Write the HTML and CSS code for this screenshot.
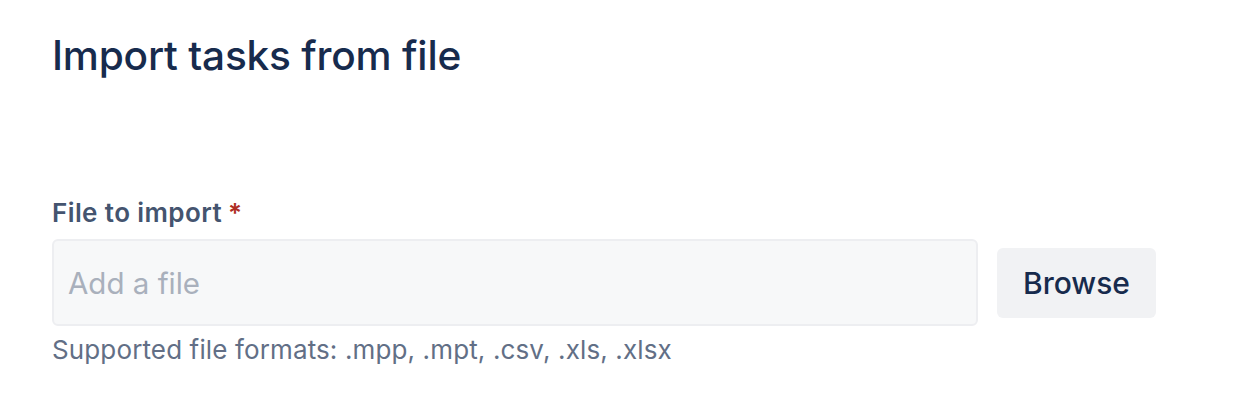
FILE: index.html
```html
<!DOCTYPE html>
<html lang="en">
<head>
<meta charset="utf-8">
<title>Import tasks from file</title>
<link rel="stylesheet" href="styles.css">
</head>
<body>
<main class="page">
  <h1 class="title">Import tasks from file</h1>
  <form class="form">
    <label class="label" for="file">File to import<span class="req">*</span></label>
    <div class="row">
      <div class="field" id="file">Add a file</div>
      <button type="button" class="browse">Browse</button>
    </div>
    <p class="help">Supported file formats: .mpp, .mpt, .csv, .xls, .xlsx</p>
  </form>
</main>
</body>
</html>
```

FILE: styles.css
```css
* { box-sizing: border-box; }
html, body { margin: 0; background: #fff; }
body {
  font-family: Inter, "Noto Sans", "Liberation Sans", sans-serif;
  color: #172B4D;
}
.page {
  padding: 28px 84px 0 52px;
}
.title {
  margin: 0;
  font-size: 40.6px;
  line-height: 56px;
  font-weight: 500;
  color: #172B4D;
  letter-spacing: -0.2px;
}
.form {
  margin-top: 113px;
}
.label {
  display: block;
  font-size: 26px;
  line-height: 32px;
  font-weight: 600;
  color: #44546F;
  letter-spacing: 0.4px;
}
.req {
  color: #AE2E24;
  margin-left: 6px;
}
.row {
  display: flex;
  align-items: center;
  gap: 19px;
  margin-top: 10px;
}
.field {
  flex: 0 0 926px;
  height: 87px;
  border: 2px solid #EDEEF1;
  border-radius: 6px;
  background: #F7F8F9;
  display: flex;
  align-items: center;
  padding: 0 14px;
  font-size: 29.5px;
  color: #A9B0BC;
}
.browse {
  width: 159px;
  height: 70px;
  border: 0;
  border-radius: 6px;
  background: #F1F2F4;
  font-family: inherit;
  font-size: 30px;
  font-weight: 500;
  color: #172B4D;
  padding: 0;
}
.help {
  margin: 8px 0 0;
  font-size: 26px;
  line-height: 32px;
  color: #626F86;
  letter-spacing: 0.13px;
}
```
